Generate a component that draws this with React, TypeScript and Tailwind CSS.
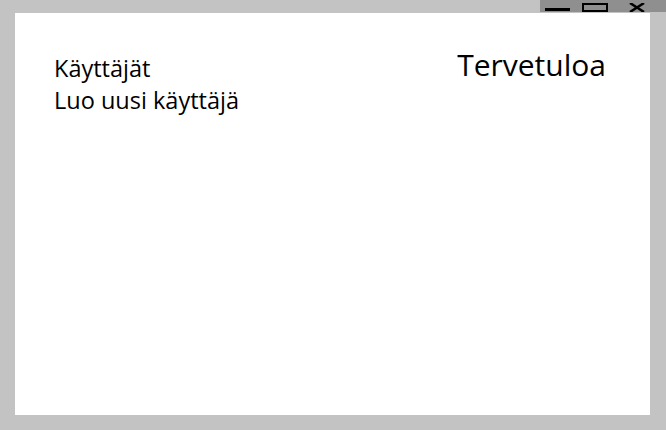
export default function App() {
  return (
    <div className="flex flex-col h-[430px] w-[666px] bg-[#c3c3c3] font-['Open_Sans',sans-serif] text-black">
      <div className="flex justify-end h-[13px]">
        <div className="flex items-start w-[126px] h-[12px] bg-[#8f8f8f] relative">
          <div className="absolute left-[5px] top-[8px] w-[25px] h-[3px] bg-black" />
          <div className="absolute left-[42px] top-[3px] w-[26px] h-[9px] border-2 border-black" />
          <svg className="absolute left-[88px] top-[3px]" width="18" height="9" viewBox="0 0 18 9">
            <path d="M2 0 L16 9 M16 0 L2 9" stroke="black" strokeWidth="2.5" />
          </svg>
        </div>
      </div>
      <div className="ml-[15px] w-[635px] h-[402px] bg-white flex justify-between pl-[39px] pr-[44px] pt-[39px]">
        <div className="flex flex-col text-[23.5px] leading-[32px]">
          <span>Käyttäjät</span>
          <span>Luo uusi käyttäjä</span>
        </div>
        <div className="text-[30px] leading-[36px] -mt-[5px]">Tervetuloa</div>
      </div>
    </div>
  );
}
